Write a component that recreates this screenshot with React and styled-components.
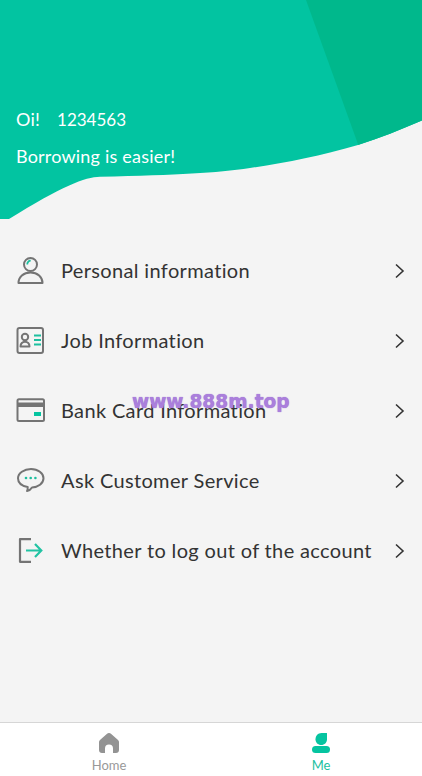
import React from 'react';
import styled, { createGlobalStyle } from 'styled-components';

const GlobalStyle = createGlobalStyle`
  html, body {
    margin: 0;
    padding: 0;
    height: 100%;
    background: #f4f4f4;
  }
  #root { height: 100%; }
`;

const Page = styled.div`
  position: relative;
  width: 422px;
  height: 776px;
  display: flex;
  flex-direction: column;
  overflow: hidden;
  background: #f4f4f4;
  font-family: Lato, "Noto Sans", sans-serif;
  color: #333;
`;

const Hero = styled.header`
  position: relative;
  height: 219px;
  flex: none;
  box-sizing: border-box;
  padding: 107px 16px 0;
  color: #fff;
`;

const HeroArt = styled.svg`
  position: absolute;
  left: 0;
  top: 0;
`;

const HeroLine = styled.div`
  position: relative;
  font-size: 18px;
  line-height: 24px;
  letter-spacing: 0.2px;
  margin-bottom: 12px;
  white-space: nowrap;
`;

const Account = styled.span`
  margin-left: 17px;
  font-size: 17px;
  letter-spacing: 0;
`;

const Menu = styled.ul`
  list-style: none;
  margin: 0;
  padding: 17px 0 0;
  flex: 1;
`;

const Row = styled.li`
  height: 70px;
  display: flex;
  align-items: center;
  padding: 0 16px;
  font-size: 20px;
  letter-spacing: 0.35px;
  color: #333;
`;

const IconSlot = styled.span`
  width: 45px;
  flex: none;
  display: flex;
  svg { display: block; }
`;

const Label = styled.span`
  flex: 1;
  padding-bottom: 2px;
  white-space: nowrap;
`;

const Watermark = styled.div`
  position: absolute;
  left: 132px;
  top: 388px;
  font-family: "DejaVu Sans", sans-serif;
  font-weight: 700;
  font-size: 18.6px;
  line-height: 28px;
  color: #ab7fdc;
  text-shadow: 0 0 1px #8e5fc8;
  white-space: nowrap;
`;

const TabBar = styled.nav`
  height: 53px;
  flex: none;
  display: grid;
  grid-template-columns: 212px 207px;
  padding-left: 3px;
  background: #fff;
  border-top: 1px solid #d6d6d6;
`;

const Tab = styled.div`
  display: flex;
  flex-direction: column;
  align-items: center;
  padding-top: 10px;
  font-size: 13px;
  line-height: 16px;
  color: ${(p) => (p.$active ? '#1dbf9f' : '#999')};
  svg { display: block; margin-bottom: 4px; }
  &:last-child { padding-left: 5px; }
`;

const Chevron = () => (
  <svg width="12" height="16" viewBox="0 0 12 16" fill="none" stroke="#333" strokeWidth="1.6">
    <path d="M2 1.500 9 8l-7 6.500" />
  </svg>
);

const PersonIcon = () => (
  <svg width="30" height="32" viewBox="0 0 30 32" fill="none">
    <circle cx="14.500" cy="9.500" r="6.500" stroke="#747474" strokeWidth="2" />
    <path d="M11.300 9.500a3.400 3.400 0 0 1 3.400-3.800" stroke="#1dbf9f" strokeWidth="1.800" />
    <path d="M2.500 28c0-6 5-10.500 12-10.500s12 4.500 12 10.500z" stroke="#747474" strokeWidth="2" strokeLinejoin="round" />
  </svg>
);

const CardIdIcon = () => (
  <svg width="30" height="28" viewBox="0 0 30 28" fill="none">
    <rect x="1.500" y="1" width="25.500" height="25" rx="2" stroke="#747474" strokeWidth="2" />
    <circle cx="9" cy="10" r="3.200" stroke="#747474" strokeWidth="2" />
    <path d="M4.500 19.500c0-3 2-4.800 4.500-4.800s4.500 1.800 4.500 4.800z" stroke="#747474" strokeWidth="2" strokeLinejoin="round" />
    <path d="M18 8.500h7M18 13h7M18 17.500h7" stroke="#1dbf9f" strokeWidth="2" />
  </svg>
);

const BankIcon = () => (
  <svg width="30" height="26" viewBox="0 0 30 26" fill="none">
    <rect x="1.500" y="1.200" width="26.500" height="21.800" rx="1.500" stroke="#747474" strokeWidth="2" />
    <rect x="1.500" y="4.500" width="26.500" height="4.500" fill="#747474" />
    <rect x="18" y="14" width="7" height="4" fill="#05c4a0" />
  </svg>
);

const ChatIcon = () => (
  <svg width="30" height="26" viewBox="0 1 30 26" fill="none">
    <path d="M15 2c7 0 12.500 4.200 12.500 9.300S22 20.500 16 20.500c-1 1.600-2.800 3.100-5 3.600.6-1.200.8-2.500.7-4C6 19 2 15.700 2 11.300 2 6.200 8 2 15 2z" stroke="#747474" strokeWidth="2" strokeLinejoin="round" />
    <circle cx="10" cy="11" r="1.300" fill="#1dbf9f" />
    <circle cx="14.700" cy="11" r="1.300" fill="#1dbf9f" />
    <circle cx="19.400" cy="11" r="1.300" fill="#1dbf9f" />
  </svg>
);

const LogoutIcon = () => (
  <svg width="30" height="26" viewBox="0 0 30 26" fill="none">
    <path d="M15 1.200H4v22.600h11" stroke="#747474" strokeWidth="2.200" strokeLinejoin="round" />
    <path d="M10 12.500h15M19 6l6.300 6.500L19 19" stroke="#22c3a3" strokeWidth="2.200" />
  </svg>
);

const HomeIcon = () => (
  <svg width="20" height="20" viewBox="0 0 20 20">
    <path
      fill="#939393"
      d="M10 0c.9 0 1.500.4 2.200 1l6.300 5.600c1 .9 1.500 1.700 1.500 3V17c0 1.800-1.200 3-3 3h-3v-4.500a4 4 0 0 0-8 0V20H3c-1.800 0-3-1.200-3-3V9.600c0-1.300.5-2.100 1.500-3L7.800 1C8.500.4 9.100 0 10 0z"
    />
  </svg>
);

const MeIcon = () => (
  <svg width="18" height="20" viewBox="0 0 18 20">
    <path fill="#05c4a0" d="M3.500 6.200C3.500 2.800 6 0 9.500 0h5c.5 0 .5.300.5.800v5.400c0 3.400-2.500 5.800-5.800 5.800S3.500 9.600 3.500 6.200z" />
    <rect x="0" y="13" width="18" height="7" rx="3.500" fill="#05c4a0" />
  </svg>
);

const items = [
  { label: 'Personal information', Icon: PersonIcon },
  { label: 'Job Information', Icon: CardIdIcon },
  { label: 'Bank Card Information', Icon: BankIcon },
  { label: 'Ask Customer Service', Icon: ChatIcon },
  { label: 'Whether to log out of the account', Icon: LogoutIcon },
];

const waveShape =
  'M0 0H422V120.500C400 130 380 138 358 145C320 156 285 163 250 168C215 173 180 175 100 176.700C85 177 62 186 9 219H0Z';

export default function App() {
  return (
    <Page>
      <GlobalStyle />
      <Hero>
        <HeroArt width="422" height="219" viewBox="0 0 422 219">
          <clipPath id="wave">
            <path d={waveShape} />
          </clipPath>
          <path fill="#02c4a1" d={waveShape} />
          <path fill="#00b88c" clipPath="url(#wave)" d="M306 0H422V219H385Z" />
        </HeroArt>
        <HeroLine>
          Oi!<Account>1234563</Account>
        </HeroLine>
        <HeroLine>Borrowing is easier!</HeroLine>
      </Hero>
      <Menu>
        {items.map(({ label, Icon }) => (
          <Row key={label}>
            <IconSlot>
              <Icon />
            </IconSlot>
            <Label>{label}</Label>
            <Chevron />
          </Row>
        ))}
      </Menu>
      <Watermark>www.888m.top</Watermark>
      <TabBar>
        <Tab>
          <HomeIcon />
          Home
        </Tab>
        <Tab $active>
          <MeIcon />
          Me
        </Tab>
      </TabBar>
    </Page>
  );
}
